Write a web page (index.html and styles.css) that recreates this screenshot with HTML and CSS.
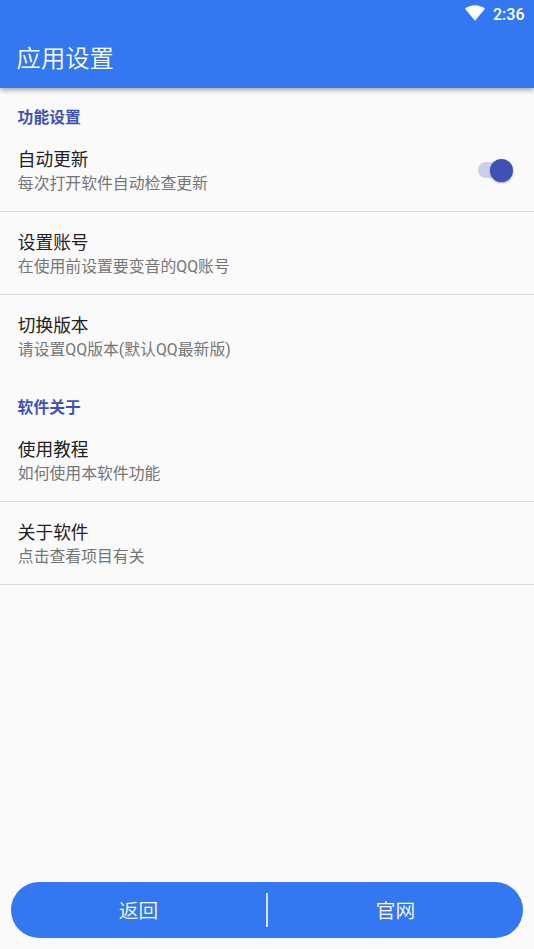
FILE: index.html
```html
<!DOCTYPE html>
<html lang="zh-CN">
<head>
<meta charset="utf-8">
<title>应用设置</title>
<link rel="stylesheet" href="styles.css">
</head>
<body>
<header class="app-header">
  <div class="status-bar">
    <svg class="wifi" viewBox="0 0 20 16" aria-hidden="true"><path d="M0 3.8C5.8-.9 14.2-.9 20 3.8L10 15.8Z" fill="#fff"/></svg>
    <time class="clock">2:36</time>
  </div>
  <h1 class="page-title">应用设置</h1>
</header>
<main class="settings">
  <section>
    <h2 class="section-title">功能设置</h2>
    <div class="row">
      <div class="row-text">
        <div class="label">自动更新</div>
        <div class="hint">每次打开软件自动检查更新</div>
      </div>
      <div class="switch" role="switch" aria-checked="true"><span class="thumb"></span></div>
    </div>
    <div class="row">
      <div class="row-text">
        <div class="label">设置账号</div>
        <div class="hint">在使用前设置要变音的QQ账号</div>
      </div>
    </div>
    <div class="row row-plain">
      <div class="row-text">
        <div class="label">切换版本</div>
        <div class="hint">请设置QQ版本(默认QQ最新版)</div>
      </div>
    </div>
  </section>
  <section>
    <h2 class="section-title">软件关于</h2>
    <div class="row">
      <div class="row-text">
        <div class="label">使用教程</div>
        <div class="hint">如何使用本软件功能</div>
      </div>
    </div>
    <div class="row">
      <div class="row-text">
        <div class="label">关于软件</div>
        <div class="hint">点击查看项目有关</div>
      </div>
    </div>
  </section>
</main>
<footer class="actions">
  <div class="action">返回</div>
  <div class="divider"></div>
  <div class="action">官网</div>
</footer>
</body>
</html>
```
FILE: styles.css
```css
* {
  box-sizing: border-box;
}

body {
  margin: 0;
  height: 949px;
  display: flex;
  flex-direction: column;
  overflow: hidden;
  background: #fafafa;
  font-family: Roboto, "Noto Sans CJK SC", sans-serif;
}

.app-header {
  height: 88px;
  flex: none;
  background: #3378f0;
  color: #fff;
  box-shadow: 0 2px 5px rgba(0, 0, 0, .36);
}

.status-bar {
  height: 28px;
  padding-right: 9.5px;
  display: flex;
  justify-content: flex-end;
  align-items: center;
  gap: 8px;
}

.wifi {
  width: 20px;
  height: 16px;
  margin-bottom: 2px;
}

.clock {
  font-size: 16px;
  font-weight: 500;
  line-height: 28px;
  padding-top: 2px;
}

.page-title {
  margin: 0;
  padding-left: 16.6px;
  font-size: 24.3px;
  font-weight: 350;
  line-height: 62px;
}

.settings {
  flex: 1;
}

.section-title {
  height: 41px;
  margin: 0;
  padding: 18px 18px 0 17.6px;
  color: #3f51b5;
  font-size: 15.8px;
  font-weight: 700;
  line-height: 23px;
}

.row {
  height: 83px;
  padding: 19px 18px 0 17.8px;
  display: flex;
  justify-content: space-between;
  border-bottom: 1px solid #dadada;
}

.row-plain {
  border-bottom-color: transparent;
}

.label {
  color: #212121;
  font-size: 17.7px;
  line-height: 25px;
}

.hint {
  color: #757575;
  font-size: 15.85px;
  line-height: 22px;
}

.switch {
  width: 34px;
  height: 16px;
  margin: 14px 4px 0 0;
  display: flex;
  align-items: center;
  justify-content: flex-end;
  border-radius: 8px;
  background: #cbcfe9;
}

.thumb {
  width: 23px;
  height: 23px;
  margin-right: -.6px;
  flex: none;
  border-radius: 50%;
  background: #3f51b5;
  box-shadow: 0 1px 2px rgba(0, 0, 0, .35);
}

.actions {
  height: 56px;
  flex: none;
  margin: 0 11px 11px;
  display: flex;
  align-items: center;
  border-radius: 28px;
  background: #3378f0;
  color: #fff;
}

.action {
  flex: 1;
  padding-top: 3px;
  text-align: center;
  font-size: 19.7px;
  font-weight: 350;
  line-height: 53px;
}

.divider {
  width: 2px;
  height: 34px;
  background: #d4e2fc;
}
```
